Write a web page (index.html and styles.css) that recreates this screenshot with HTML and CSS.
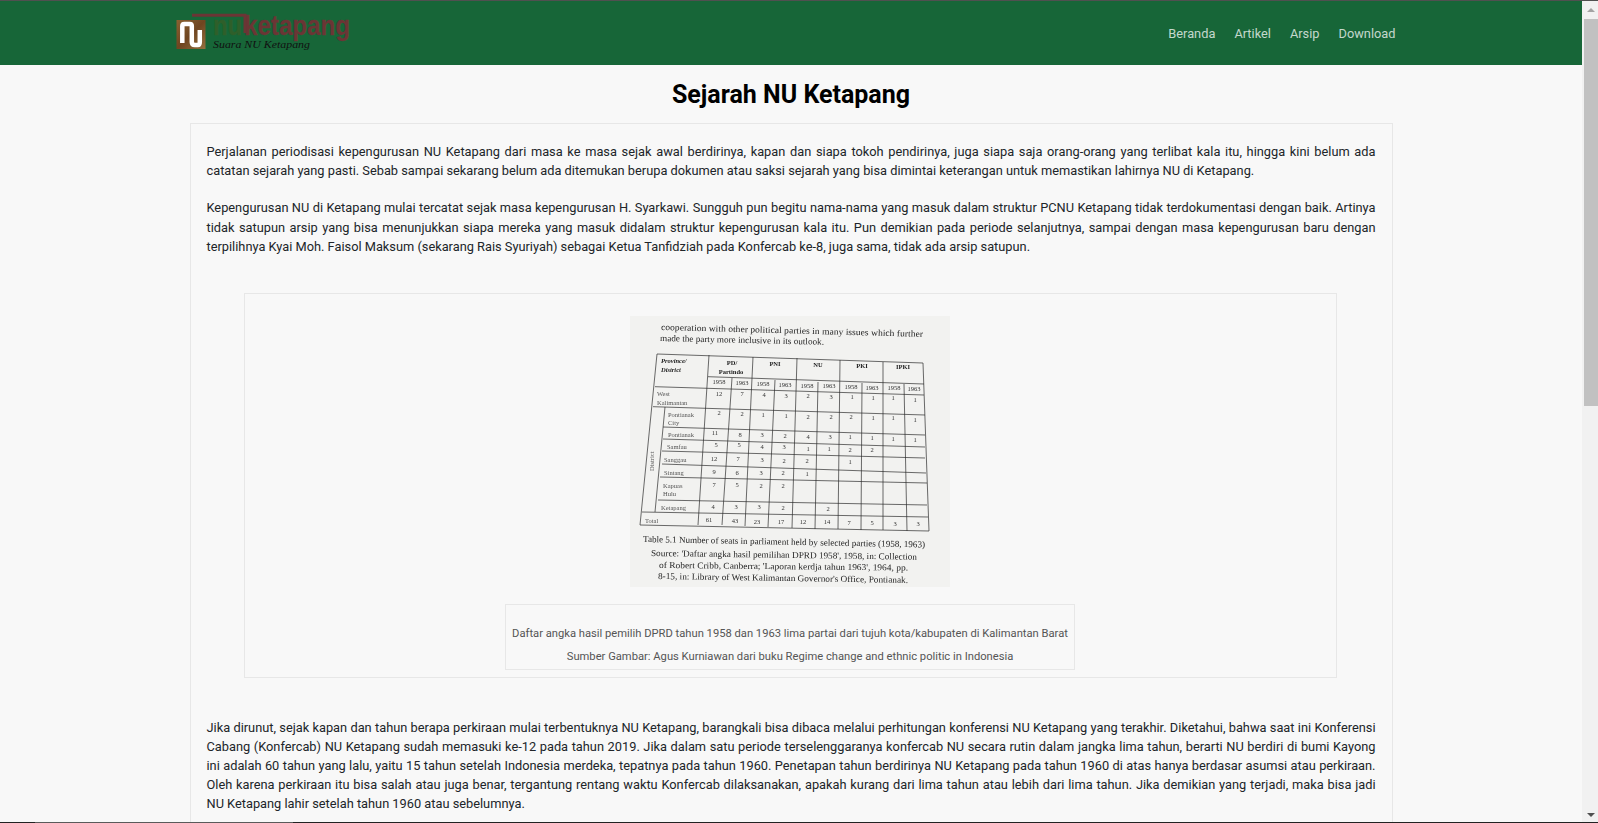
FILE: index.html
```html
<!DOCTYPE html>
<html lang="en">
<head>
  <meta charset="UTF-8">
  <meta name="viewport" content="width=device-width, initial-scale=1.0">
  <title>Sejarah NU Ketapang</title>
  <link rel="stylesheet" href="styles.css">
</head>
<body>
  <div class="edge-top"></div>
  <div class="window">
    <div class="page">
      <header class="site-header">
        <div class="header-inner">
          <a href="#" class="logo">
            <svg width="180" height="50" viewBox="0 -2 180 50">
              <defs>
                <linearGradient id="woodGrad" x1="0" y1="0" x2="1" y2="1">
                  <stop offset="0" stop-color="#8a6231"/>
                  <stop offset="0.5" stop-color="#6f4520"/>
                  <stop offset="1" stop-color="#93703f"/>
                </linearGradient>
              </defs>
              <rect x="1.500" y="10" width="29" height="29" fill="url(#woodGrad)"/>
              <path d="M7.300 33V16c0-1 .5-2 2-2h5.500c1.500 0 2 1 2 2v16c0 2 1 3 3 3h3c1.500 0 2-1 2-3V20" fill="none" stroke="#fff" stroke-width="4.500"/>
              <path d="M17 5.300H70V23" fill="none" stroke="#6b3535" stroke-width="3"/>
              <text class="logo-nu" x="38" y="24.500" textLength="29" lengthAdjust="spacingAndGlyphs">nu</text>
              <text class="logo-name" x="69" y="24.500" textLength="106" lengthAdjust="spacingAndGlyphs">ketapang</text>
              <text class="logo-tag" x="38" y="38" textLength="97" lengthAdjust="spacingAndGlyphs">Suara NU Ketapang</text>
            </svg>
          </a>
          <nav class="main-nav">
            <a href="#">Beranda</a>
            <a href="#">Artikel</a>
            <a href="#">Arsip</a>
            <a href="#">Download</a>
          </nav>
        </div>
      </header>

      <main class="content">
        <h1 class="page-title">Sejarah NU Ketapang</h1>
        <article class="card">
          <p>Perjalanan periodisasi kepengurusan NU Ketapang dari masa ke masa sejak awal berdirinya, kapan dan siapa tokoh pendirinya, juga siapa saja orang-orang yang terlibat kala itu, hingga kini belum ada catatan sejarah yang pasti. Sebab sampai sekarang belum ada ditemukan berupa dokumen atau saksi sejarah yang bisa dimintai keterangan untuk memastikan lahirnya NU di Ketapang.</p>
          <p>Kepengurusan NU di Ketapang mulai tercatat sejak masa kepengurusan H. Syarkawi. Sungguh pun begitu nama-nama yang masuk dalam struktur PCNU Ketapang tidak terdokumentasi dengan baik. Artinya tidak satupun arsip yang bisa menunjukkan siapa mereka yang masuk didalam struktur kepengurusan kala itu. Pun demikian pada periode selanjutnya, sampai dengan masa kepengurusan baru dengan terpilihnya Kyai Moh. Faisol Maksum (sekarang Rais Syuriyah) sebagai Ketua Tanfidziah pada Konfercab ke-8, juga sama, tidak ada arsip satupun.</p>

          <figure class="figure">
            <svg class="scan" width="320" height="271" viewBox="0 0 320 271">
              <rect width="320" height="271" fill="#f2f2f0"/>
              <g class="scan-prose">
                <text x="31" y="14" textLength="262" lengthAdjust="spacingAndGlyphs" transform="rotate(1.500 31 14)">cooperation with other political parties in many issues which further</text>
                <text x="30" y="25" textLength="164" lengthAdjust="spacingAndGlyphs" transform="rotate(1.300 30 25)">made the party more inclusive in its outlook.</text>
                <text x="13" y="226" textLength="282" lengthAdjust="spacingAndGlyphs" transform="rotate(1.100 13 226)">Table 5.1 Number of seats in parliament held by selected parties (1958, 1963)</text>
                <text x="21" y="240" textLength="266" lengthAdjust="spacingAndGlyphs" transform="rotate(.800 21 240)">Source: 'Daftar angka hasil pemilihan DPRD 1958', 1958, in: Collection</text>
                <text x="29" y="252" textLength="249" lengthAdjust="spacingAndGlyphs" transform="rotate(.600 29 252)">of Robert Cribb, Canberra; 'Laporan kerdja tahun 1963', 1964, pp.</text>
                <text x="28" y="263" textLength="250" lengthAdjust="spacingAndGlyphs" transform="rotate(.900 28 263)">8-15, in: Library of West Kalimantan Governor's Office, Pontianak.</text>
              </g>
              <path class="scan-lines" d="M27 38L293 47M78 60.700L294 68M25 70.700L294 79M23 90.700L295 99M33 111L295 119M33 123L295 131M32 135L295 142M32 148L296 157M30 161L297 167M28 184L297 189M12 196L298 201M10 209L299 215M27 38L10 209M35 91L25 196M79 39L68 209M102 62L92 209M123 41L115 210M145 64L138 211M167 42L162 212M188 66L185 213M210 44L208 213M232 67L231 214M253 46L253 214M274 68L277 215M293 47L299 215"/>
              <g class="scan-head">
                <text class="scan-corner" x="31" y="47">Province/</text>
                <text class="scan-corner" x="31" y="55.500">District</text>
                <text x="102" y="49" text-anchor="middle">PD/</text>
                <text x="101" y="57.500" text-anchor="middle">Partindo</text>
                <text x="145" y="50" text-anchor="middle">PNI</text>
                <text x="188" y="51" text-anchor="middle">NU</text>
                <text x="232" y="52" text-anchor="middle">PKI</text>
                <text x="273" y="53" text-anchor="middle">IPKI</text>
              </g>
              <g class="scan-label">
                <text x="27" y="80">West</text>
                <text x="27" y="89">Kalimantan</text>
                <text x="38" y="101">Pontianak</text>
                <text x="38" y="109">City</text>
                <text x="38" y="121">Pontianak</text>
                <text x="37" y="133">Samfau</text>
                <text x="34" y="146">Sanggau</text>
                <text x="34" y="159">Sintang</text>
                <text x="33" y="172">Kapuas</text>
                <text x="33" y="180">Hulu</text>
                <text x="31" y="194">Ketapang</text>
                <text x="15" y="207">Total</text>
                <text x="0" y="0" transform="translate(24 155) rotate(-90)">District</text>
              </g>
              <g class="scan-cells">
                <text x="89" y="68">1958</text><text x="112" y="69">1963</text><text x="133" y="70">1958</text><text x="155" y="71">1963</text><text x="177" y="72">1958</text><text x="199" y="72">1963</text><text x="221" y="73">1958</text><text x="242" y="74">1963</text><text x="264" y="74">1958</text><text x="284" y="75">1963</text>
                <text x="89" y="80">12</text><text x="112" y="80">7</text><text x="134" y="81">4</text><text x="156" y="82">3</text><text x="178" y="82">2</text><text x="201" y="83">3</text><text x="222" y="83">1</text><text x="243" y="84">1</text><text x="263" y="84">1</text><text x="285" y="86">1</text>
                <text x="89" y="99">2</text><text x="112" y="100">2</text><text x="133" y="101">1</text><text x="156" y="102">1</text><text x="178" y="103">2</text><text x="201" y="103">2</text><text x="221" y="103">2</text><text x="243" y="104">1</text><text x="263" y="104">1</text><text x="285" y="106">1</text>
                <text x="85" y="119">11</text><text x="110" y="121">8</text><text x="132" y="121">3</text><text x="155" y="122">2</text><text x="178" y="123">4</text><text x="200" y="123">3</text><text x="220" y="123">1</text><text x="242" y="124">1</text><text x="263" y="125">1</text><text x="285" y="126">1</text>
                <text x="86" y="131">5</text><text x="109" y="131">5</text><text x="132" y="133">4</text><text x="154" y="133">3</text><text x="178" y="135">1</text><text x="199" y="135">1</text><text x="220" y="136">2</text><text x="242" y="136">2</text>
                <text x="84" y="145">12</text><text x="108" y="145">7</text><text x="132" y="146">3</text><text x="154" y="147">2</text><text x="177" y="147">2</text><text x="220" y="148">1</text>
                <text x="84" y="158">9</text><text x="107" y="159">6</text><text x="131" y="159">3</text><text x="153" y="159">2</text><text x="177" y="160">1</text>
                <text x="84" y="171">7</text><text x="107" y="171">5</text><text x="131" y="172">2</text><text x="153" y="172">2</text>
                <text x="83" y="193">4</text><text x="106" y="193">3</text><text x="129" y="193">3</text><text x="153" y="194">2</text><text x="198" y="195">2</text>
                <text x="79" y="206">61</text><text x="105" y="207">43</text><text x="127" y="208">23</text><text x="151" y="208">17</text><text x="173" y="208">12</text><text x="197" y="208">14</text><text x="219" y="209">7</text><text x="242" y="209">5</text><text x="265" y="210">3</text><text x="288" y="210">3</text>
              </g>
            </svg>
            <figcaption class="caption">
              <p>Daftar angka hasil pemilih DPRD tahun 1958 dan 1963 lima partai dari tujuh kota/kabupaten di Kalimantan Barat</p>
              <p>Sumber Gambar: Agus Kurniawan dari buku Regime change and ethnic politic in Indonesia</p>
            </figcaption>
          </figure>

          <p>Jika dirunut, sejak kapan dan tahun berapa perkiraan mulai terbentuknya NU Ketapang, barangkali bisa dibaca melalui perhitungan konferensi NU Ketapang yang terakhir. Diketahui, bahwa saat ini Konferensi Cabang (Konfercab) NU Ketapang sudah memasuki ke-12 pada tahun 2019. Jika dalam satu periode terselenggaranya konfercab NU secara rutin dalam jangka lima tahun, berarti NU berdiri di bumi Kayong ini adalah 60 tahun yang lalu, yaitu 15 tahun setelah Indonesia merdeka, tepatnya pada tahun 1960. Penetapan tahun berdirinya NU Ketapang pada tahun 1960 di atas hanya berdasar asumsi atau perkiraan. Oleh karena perkiraan itu bisa salah atau juga benar, tergantung rentang waktu Konfercab dilaksanakan, apakah kurang dari lima tahun atau lebih dari lima tahun. Jika demikian yang terjadi, maka bisa jadi NU Ketapang lahir setelah tahun 1960 atau sebelumnya.</p>
        </article>
      </main>
    </div>

    <div class="scrollbar">
      <span class="arrow-up"></span>
      <span class="thumb"></span>
      <span class="arrow-down"></span>
    </div>
  </div>
  <div class="edge-bottom"></div>
</body>
</html>
```

FILE: styles.css
```css
html, body {
  height: 100%;
}

body {
  margin: 0;
  display: flex;
  flex-direction: column;
  overflow: hidden;
  font-family: Roboto, "Noto Sans", sans-serif;
  background-color: #f8f8f8;
  color: #212529;
}

.edge-top {
  height: 1px;
  background-color: #505050;
}

.edge-bottom {
  height: 1px;
  background: linear-gradient(to right, #222 35px, #5a5a5a 35px, #5a5a5a 293px, #222 293px);
}

.window {
  flex: 1;
  display: flex;
  min-height: 0;
}

.page {
  flex: 1;
  min-width: 0;
  overflow: hidden;
}

/* header */
.site-header {
  height: 64px;
  background-color: #176638;
}

.header-inner {
  width: 1233px;
  height: 100%;
  margin: 0 auto;
  display: flex;
  align-items: center;
  justify-content: space-between;
}

.logo {
  display: block;
  height: 50px;
}

.logo svg {
  display: block;
}

.logo-nu, .logo-name {
  font-family: "Liberation Sans", sans-serif;
  font-weight: bold;
  font-size: 28px;
  stroke-width: 0.3;
}

.logo-nu {
  fill: #2f5f2a;
  stroke: #2f5f2a;
}

.logo-name {
  fill: #6b3535;
  stroke: #6b3535;
}

.logo-tag {
  font-family: "Liberation Serif", serif;
  font-style: italic;
  font-size: 11px;
  fill: #111;
}

.main-nav {
  display: flex;
  padding-right: 2.5px;
}

.main-nav a {
  padding: 0 9.5px;
  font-size: 12.8px;
  color: rgba(255, 255, 255, 0.75);
  text-decoration: none;
}

/* content */
.content {
  width: 1203px;
  margin: 0 auto;
}

.page-title {
  margin: 0;
  height: 58px;
  line-height: 59px;
  text-align: center;
  font-size: 25px;
  font-weight: bold;
  color: #000;
}

.card {
  padding: 18px 16px;
  border: 1px solid #e7e7e7;
}

.card p {
  margin: 0 0 18px;
  font-size: 12.8px;
  line-height: 19.2px;
  text-align: justify;
}

.figure {
  margin: 37px 39px 39.5px 37px;
  padding: 22px 0 7px;
  border: 1px solid #e7e7e7;
  display: flex;
  flex-direction: column;
  align-items: center;
}

.scan {
  display: block;
  filter: blur(0.4px);
}

.scan-prose text, .scan-label text, .scan-head text, .scan-cells text {
  font-family: "Liberation Serif", serif;
}

.scan-prose text {
  font-size: 9px;
  fill: #1f1f1f;
}

.scan-lines {
  fill: none;
  stroke: #2d2d2d;
  stroke-width: 0.7;
}

.scan-head text {
  font-size: 6.5px;
  font-weight: bold;
  fill: #222;
}

.scan-head .scan-corner {
  font-style: italic;
}

.scan-label text {
  font-size: 6.5px;
  fill: #555;
}

.scan-cells text {
  font-size: 6.5px;
  fill: #333;
  text-anchor: middle;
}

.caption {
  width: 568px;
  margin-top: 17px;
  padding: 17px 0 1px;
  border: 1px solid #e7e7e7;
}

.card .caption p {
  margin: 0;
  font-size: 11.2px;
  line-height: 23px;
  text-align: center;
  color: #555;
}

/* fake scrollbar, the page itself does not scroll */
.scrollbar {
  width: 16px;
  display: flex;
  flex-direction: column;
  align-items: flex-end;
  background-color: #f1f1f1;
}

.thumb {
  width: 14px;
  height: 387px;
  margin-top: 7px;
  background-color: #c1c1c1;
}

.arrow-up, .arrow-down {
  width: 0;
  height: 0;
  border-left: 4px solid transparent;
  border-right: 4px solid transparent;
  margin-right: 3px;
}

.arrow-up {
  margin-top: 7px;
  border-bottom: 4px solid #a3a3a3;
}

.arrow-down {
  margin-top: auto;
  margin-bottom: 5px;
  border-top: 4px solid #505050;
}
```
